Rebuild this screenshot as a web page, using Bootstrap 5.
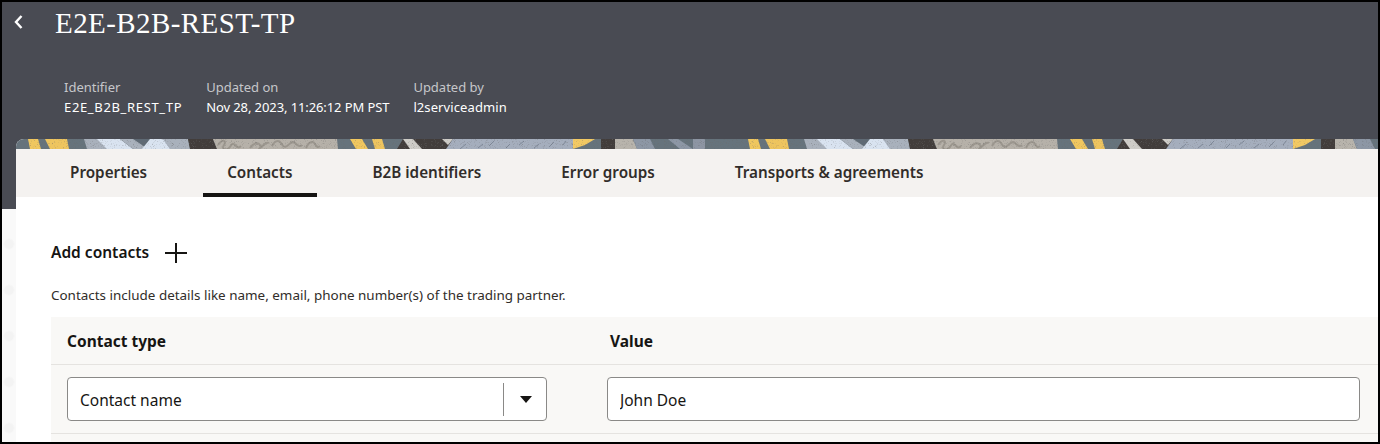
<!DOCTYPE html>
<html lang="en">
<head>
<meta charset="utf-8">
<title>E2E-B2B-REST-TP</title>
<link href="https://cdn.jsdelivr.net/npm/bootstrap@5.3.0/dist/css/bootstrap.min.css" rel="stylesheet">
<style>
html,body{margin:0;height:444px;overflow:hidden;background:#000}
body{font-family:"Noto Sans","Liberation Sans",sans-serif;color:#161513}
.frame{height:444px;border:2px solid #000;background-color:#f9f9f9;background-image:radial-gradient(circle at 7px 12px,#f3f3f3 0,#f3f3f3 4px,transparent 6px);background-size:14px 46px;overflow:hidden}
.hero{height:207px;background:#494b53;color:#fff;padding:4px 0 0 11px}
.back{width:11px;height:16px;margin-top:8px;margin-right:31px}
.ttl{font-family:"Liberation Serif",serif;font-size:29px;line-height:34px;margin:0;font-weight:400;letter-spacing:.42px;color:#fff}
.meta{margin:37px 0 0 51px;gap:24px;font-size:13px;line-height:20px}
.meta dt{font-weight:400;color:#c6c7ca}
.meta dd{margin:0;color:#fff}
.meta .v-id{letter-spacing:.66px}
.meta .v-date{letter-spacing:-.1px}
.meta .v-user{letter-spacing:.1px}
.panel{margin:-70px 0 0 14px;background:#fff;border-radius:8px 0 0 0;overflow:hidden}
.strip{display:block;width:100%;height:10px}
.tabbar{height:48px;background:#f4f2f0;padding-left:30px;gap:32px}
.tabbar .nav-link{padding:0 24px;height:48px;line-height:46px;font-size:15.25px;font-weight:600;color:#312d2a;border-bottom:4px solid transparent}
.tabbar .nav-link.active{color:#312d2a;border-bottom-color:#161513}
.content{padding:43px 0 0 35px;height:245px;background:#fff}
.addrow{height:24px;gap:16px;font-size:15.5px;font-weight:600;line-height:24px}
.addrow svg{margin-top:2px}
.hint{font-size:13.45px;line-height:20px;margin:21px 0 0;color:#312d2a}
.ctable{margin-top:12px;background:#f9f8f6;height:125px}
.chead{height:48px;border-bottom:1px solid #e5e3e0;font-size:15.5px;font-weight:700;line-height:49px}
.cbody{height:69px;border-bottom:1px solid #e5e3e0;padding-top:12px}
.c1{width:543px;padding-left:16px}
.c2{padding-left:16px}
.pick{width:480px;height:44px;background:#fff;border:1px solid #8a8987;border-radius:4px;padding-left:12px;font-size:15.5px}
.pick .lbl{flex:1;padding-top:3px}
.pick .sep{width:1px;height:33px;background:#8a8987}
.pick .car{width:42px;padding-left:2px;text-align:center;line-height:0}
.cinput.form-control{width:753px;height:44px;margin-left:13px;border:1px solid #8a8987;border-radius:4px;padding:1px 12px 0;font-size:15.5px;color:#161513;box-shadow:none}
</style>
</head>
<body>
<div class="frame">
  <header class="hero">
    <div class="d-flex align-items-start">
      <svg class="back" viewBox="0 0 11 16" aria-hidden="true"><path d="M8.500 2 3 8l5.500 6" fill="none" stroke="#fff" stroke-width="2.400"/></svg>
      <h1 class="ttl">E2E-B2B-REST-TP</h1>
    </div>
    <dl class="meta d-flex">
      <div><dt>Identifier</dt><dd class="v-id">E2E_B2B_REST_TP</dd></div>
      <div><dt>Updated on</dt><dd class="v-date">Nov 28, 2023, 11:26:12 PM PST</dd></div>
      <div><dt>Updated by</dt><dd class="v-user">l2serviceadmin</dd></div>
    </dl>
  </header>
  <section class="panel">
    <svg class="strip" viewBox="16 0 1362 10" preserveAspectRatio="none" aria-hidden="true">
      <defs>
        <filter id="grain" x="0" y="0" width="100%" height="100%">
          <feTurbulence type="fractalNoise" baseFrequency="1.100" numOctaves="2" seed="4" result="n"/>
          <feColorMatrix in="n" type="matrix" values="0 0 0 0 0.15 0 0 0 0 0.15 0 0 0 0 0.15 2 0 0 0 -1.150"/>
          <feComposite in2="SourceGraphic" operator="in" result="s"/>
          <feMerge><feMergeNode in="SourceGraphic"/><feMergeNode in="s"/></feMerge>
        </filter>
        <g id="tile">
          <rect x="28" y="0" width="720" height="10" fill="#66737c"/>
          <polygon points="28,0 38,0 41,10 30,10" fill="#f0c75e"/>
          <polygon points="45,0 67,0 69,10 50,10" fill="#eec55f"/>
          <polygon points="84,0 100,0 112,10 87,10" fill="#a9b1bc"/>
          <polygon points="97,0 120,0 133,10 107,10" fill="#d9e3f0"/>
          <polygon points="120,0 163,0 170,5 190,10 133,10" fill="#a9b1bc"/>
          <polygon points="133,0 150,0 148,10" fill="#5f6b74"/>
          <polygon points="150,0 163,0 170,10 142,10" fill="#d9e3f0"/>
          <polygon points="163,0 188,0 190,10 170,10" fill="#a9b1bc"/>
          <polygon points="188,0 213,0 217,10 190,10" fill="#433d3a"/>
          <polygon points="213,0 337,0 338,10 217,10" fill="#b6b1a9"/>
          <g fill="none" stroke="#9b968e" stroke-width="2">
            <path d="M218 6c5-7 9-4 6 0s2 6 5 3 3-6 6-3 4 3 6 1"/>
            <path d="M250 9c3-5 8-6 10-3s-3 5 0 3 6-7 9-5"/>
            <path d="M272 7c3-6 7-6 9-3s3 5 6 3 5-6 8-3 5 4 7 2"/>
            <path d="M306 9c3-7 7-7 9-4s2 4 5 2"/>
          </g>
          <polygon points="350,0 362,0 368,10 356,10" fill="#f0c75e"/>
          <polygon points="372,0 382,0 385,10 375,10" fill="#eec55f"/>
          <polygon points="403,0 453,0 448,10 397,10" fill="#433d3a"/>
          <polygon points="403,0 413,0 422,10 410,10" fill="#cfcdc8"/>
          <polygon points="442,0 453,0 448,6" fill="#cfcdc8"/>
          <polygon points="453,0 573,0 573,10 446,10" fill="#a5aebd"/>
          <g fill="none" stroke="#7f8999" stroke-width="1">
            <path d="M460 10l6-5M478 9l5-4M489 7l5-5M506 9l4-4M519 6l5-4M534 9l5-4M549 8l5-5M563 6l3-4"/>
          </g>
          <polygon points="573,0 595,0 585,6 573,10" fill="#f2c963"/>
          <rect x="601" y="0" width="14" height="10" fill="#433d3a"/>
          <polygon points="615,0 633,0 637,10 615,10" fill="#b8b4ac"/>
          <polygon points="633,0 650,0 655,10 637,10" fill="#8d97a5"/>
          <polygon points="668,0 678,0 693,10 680,10" fill="#8d97a5"/>
          <rect x="693" y="0" width="12" height="10" fill="#8d95a3"/>
        </g>
      </defs>
      <rect x="16" y="0" width="12" height="10" fill="#66737c"/>
      <g filter="url(#grain)">
        <use href="#tile"/>
        <use href="#tile" x="720"/>
      </g>
    </svg>
    <nav class="tabbar nav">
      <a class="nav-link" href="#">Properties</a>
      <a class="nav-link active" href="#">Contacts</a>
      <a class="nav-link" href="#">B2B identifiers</a>
      <a class="nav-link" href="#">Error groups</a>
      <a class="nav-link" href="#">Transports &amp; agreements</a>
    </nav>
    <div class="content">
      <div class="addrow d-flex align-items-center">
        <span>Add contacts</span>
        <svg width="22" height="20" viewBox="0 0 22 20" aria-hidden="true"><path d="M11 0v20M0 10h22" stroke="#161513" stroke-width="2"/></svg>
      </div>
      <p class="hint">Contacts include details like name, email, phone number(s) of the trading partner.</p>
      <div class="ctable">
        <div class="chead d-flex">
          <div class="c1">Contact type</div>
          <div class="c2">Value</div>
        </div>
        <div class="cbody d-flex">
          <div class="c1">
            <div class="pick d-flex align-items-center">
              <span class="lbl">Contact name</span>
              <span class="sep"></span>
              <span class="car"><svg width="12" height="7" viewBox="0 0 12 7" aria-hidden="true"><path d="M0 0h12L6 7z" fill="#161513"/></svg></span>
            </div>
          </div>
          <input class="form-control cinput" type="text" value="John Doe" aria-label="Value">
        </div>
      </div>
    </div>
  </section>
</div>
<script src="https://cdn.jsdelivr.net/npm/bootstrap@5.3.0/dist/js/bootstrap.bundle.min.js"></script>
</body>
</html>
